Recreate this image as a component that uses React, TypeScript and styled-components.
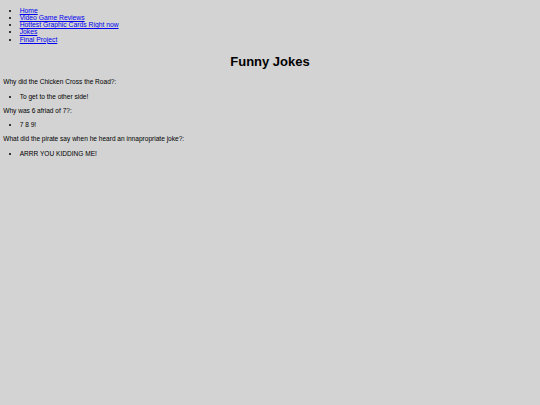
import React from "react";
import styled, { createGlobalStyle } from "styled-components";

const Global = createGlobalStyle`
  html, body {
    background: #d3d3d3;
  }
  body {
    margin: 0 3.2px;
    font-family: "Liberation Sans", Arial, sans-serif;
    font-size: 6.57px;
    line-height: 7.3px;
    color: #000;
  }
`;

const List = styled.ul`
  margin: 6.6px 0;
  padding-left: 16.5px;
  list-style: disc;
`;

const NavList = styled(List)`
  font-size: 6.78px;
`;

const Item = styled.li``;

const NavLink = styled.a`
  color: #0000ee;
  text-decoration: underline;
`;

const Title = styled.h1`
  font-size: 13px;
  line-height: 15px;
  font-weight: bold;
  text-align: center;
  margin: 10.6px 0 9.6px;
`;

const Question = styled.p`
  margin: 7px 0;
`;

const nav = [
  "Home",
  "Video Game Reviews",
  "Hottest Graphic Cards Right now",
  "Jokes",
  "Final Project",
];

const jokes = [
  ["Why did the Chicken Cross the Road?:", "To get to the other side!"],
  ["Why was 6 afriad of 7?:", "7 8 9!"],
  [
    "What did the pirate say when he heard an innapropriate joke?:",
    "ARRR YOU KIDDING ME!",
  ],
];

export default function App() {
  return (
    <>
      <Global />
      <NavList>
        {nav.map((n) => (
          <Item key={n}>
            <NavLink href="#">{n}</NavLink>
          </Item>
        ))}
      </NavList>
      <Title>Funny Jokes</Title>
      {jokes.map(([q, a]) => (
        <React.Fragment key={q}>
          <Question>{q}</Question>
          <List>
            <Item>{a}</Item>
          </List>
        </React.Fragment>
      ))}
    </>
  );
}
